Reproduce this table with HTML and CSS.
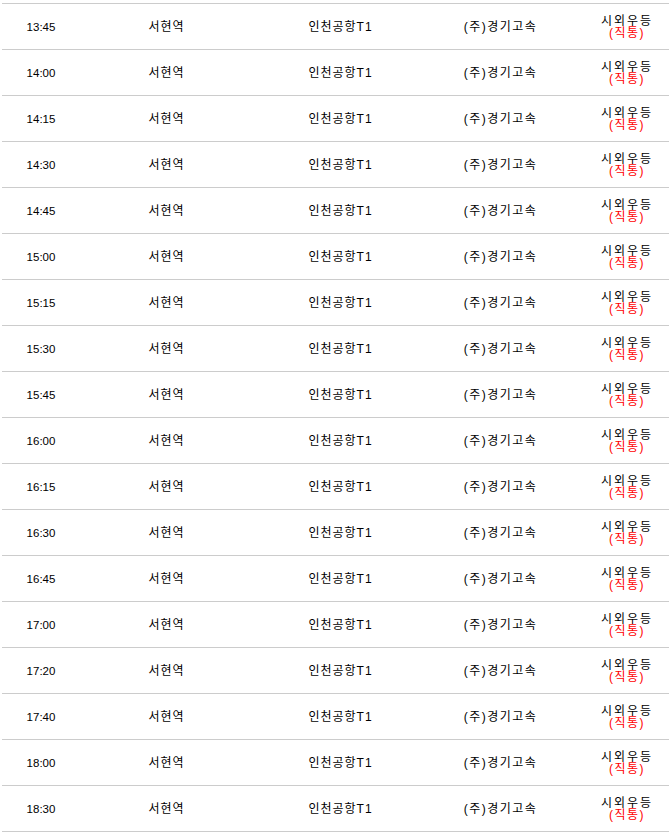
FILE: index.html
```html
<!DOCTYPE html>
<html lang="ko">
<head>
<meta charset="utf-8">
<title>시간표</title>
<link rel="stylesheet" href="styles.css">
</head>
<body>
<div class="table">
  <div class="row"><div class="c time">13:45</div><div class="c ko">서현역</div><div class="c ko">인천공항T1</div><div class="c ko co">(주)경기고속</div><div class="c grade"><div>시외우등</div><div class="red">(직통)</div></div></div>
  <div class="row"><div class="c time">14:00</div><div class="c ko">서현역</div><div class="c ko">인천공항T1</div><div class="c ko co">(주)경기고속</div><div class="c grade"><div>시외우등</div><div class="red">(직통)</div></div></div>
  <div class="row"><div class="c time">14:15</div><div class="c ko">서현역</div><div class="c ko">인천공항T1</div><div class="c ko co">(주)경기고속</div><div class="c grade"><div>시외우등</div><div class="red">(직통)</div></div></div>
  <div class="row"><div class="c time">14:30</div><div class="c ko">서현역</div><div class="c ko">인천공항T1</div><div class="c ko co">(주)경기고속</div><div class="c grade"><div>시외우등</div><div class="red">(직통)</div></div></div>
  <div class="row"><div class="c time">14:45</div><div class="c ko">서현역</div><div class="c ko">인천공항T1</div><div class="c ko co">(주)경기고속</div><div class="c grade"><div>시외우등</div><div class="red">(직통)</div></div></div>
  <div class="row"><div class="c time">15:00</div><div class="c ko">서현역</div><div class="c ko">인천공항T1</div><div class="c ko co">(주)경기고속</div><div class="c grade"><div>시외우등</div><div class="red">(직통)</div></div></div>
  <div class="row"><div class="c time">15:15</div><div class="c ko">서현역</div><div class="c ko">인천공항T1</div><div class="c ko co">(주)경기고속</div><div class="c grade"><div>시외우등</div><div class="red">(직통)</div></div></div>
  <div class="row"><div class="c time">15:30</div><div class="c ko">서현역</div><div class="c ko">인천공항T1</div><div class="c ko co">(주)경기고속</div><div class="c grade"><div>시외우등</div><div class="red">(직통)</div></div></div>
  <div class="row"><div class="c time">15:45</div><div class="c ko">서현역</div><div class="c ko">인천공항T1</div><div class="c ko co">(주)경기고속</div><div class="c grade"><div>시외우등</div><div class="red">(직통)</div></div></div>
  <div class="row"><div class="c time">16:00</div><div class="c ko">서현역</div><div class="c ko">인천공항T1</div><div class="c ko co">(주)경기고속</div><div class="c grade"><div>시외우등</div><div class="red">(직통)</div></div></div>
  <div class="row"><div class="c time">16:15</div><div class="c ko">서현역</div><div class="c ko">인천공항T1</div><div class="c ko co">(주)경기고속</div><div class="c grade"><div>시외우등</div><div class="red">(직통)</div></div></div>
  <div class="row"><div class="c time">16:30</div><div class="c ko">서현역</div><div class="c ko">인천공항T1</div><div class="c ko co">(주)경기고속</div><div class="c grade"><div>시외우등</div><div class="red">(직통)</div></div></div>
  <div class="row"><div class="c time">16:45</div><div class="c ko">서현역</div><div class="c ko">인천공항T1</div><div class="c ko co">(주)경기고속</div><div class="c grade"><div>시외우등</div><div class="red">(직통)</div></div></div>
  <div class="row"><div class="c time">17:00</div><div class="c ko">서현역</div><div class="c ko">인천공항T1</div><div class="c ko co">(주)경기고속</div><div class="c grade"><div>시외우등</div><div class="red">(직통)</div></div></div>
  <div class="row"><div class="c time">17:20</div><div class="c ko">서현역</div><div class="c ko">인천공항T1</div><div class="c ko co">(주)경기고속</div><div class="c grade"><div>시외우등</div><div class="red">(직통)</div></div></div>
  <div class="row"><div class="c time">17:40</div><div class="c ko">서현역</div><div class="c ko">인천공항T1</div><div class="c ko co">(주)경기고속</div><div class="c grade"><div>시외우등</div><div class="red">(직통)</div></div></div>
  <div class="row"><div class="c time">18:00</div><div class="c ko">서현역</div><div class="c ko">인천공항T1</div><div class="c ko co">(주)경기고속</div><div class="c grade"><div>시외우등</div><div class="red">(직통)</div></div></div>
  <div class="row"><div class="c time">18:30</div><div class="c ko">서현역</div><div class="c ko">인천공항T1</div><div class="c ko co">(주)경기고속</div><div class="c grade"><div>시외우등</div><div class="red">(직통)</div></div></div>
</div>
</body>
</html>
```

FILE: styles.css
```css
html, body {
  margin: 0;
  padding: 0;
  background: #ffffff;
  overflow: hidden;
}

body {
  font-family: "Liberation Sans", "Noto Sans CJK KR", sans-serif;
  font-size: 12px;
  color: #000000;
}

.table {
  margin: 3px 0 0 2px;
  width: 678px;
  border-top: 1px solid #cccccc;
}

.row {
  display: grid;
  grid-template-columns: 78px 172px 176px 144px 108px;
  height: 45px;
  border-bottom: 1px solid #cccccc;
  align-items: center;
}

.c {
  text-align: center;
  line-height: 14px;
  white-space: nowrap;
}

.time {
  font-size: 11.5px;
}

.ko {
  letter-spacing: 1px;
  text-indent: 1px;
}

.co {
  letter-spacing: 1.5px;
}

.grade {
  line-height: 12px;
  letter-spacing: 2px;
  text-indent: 2px;
  padding-top: 1px;
}

.red {
  color: #ff0000;
  letter-spacing: 1.5px;
}
```
